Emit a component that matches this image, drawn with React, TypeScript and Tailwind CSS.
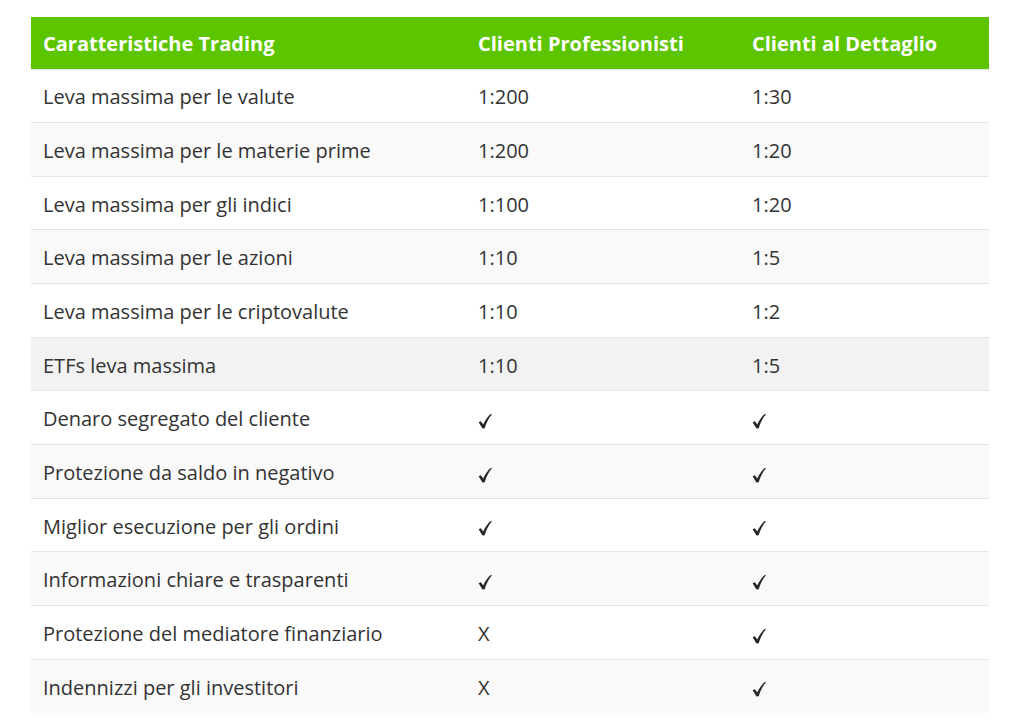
import React from 'react';

type Row = { label: string; pro: string; retail: string };

const rows: Row[] = [
  { label: 'Leva massima per le valute', pro: '1:200', retail: '1:30' },
  { label: 'Leva massima per le materie prime', pro: '1:200', retail: '1:20' },
  { label: 'Leva massima per gli indici', pro: '1:100', retail: '1:20' },
  { label: 'Leva massima per le azioni', pro: '1:10', retail: '1:5' },
  { label: 'Leva massima per le criptovalute', pro: '1:10', retail: '1:2' },
  { label: 'ETFs leva massima', pro: '1:10', retail: '1:5' },
  { label: 'Denaro segregato del cliente', pro: '✓', retail: '✓' },
  { label: 'Protezione da saldo in negativo', pro: '✓', retail: '✓' },
  { label: 'Miglior esecuzione per gli ordini', pro: '✓', retail: '✓' },
  { label: 'Informazioni chiare e trasparenti', pro: '✓', retail: '✓' },
  { label: 'Protezione del mediatore finanziario', pro: 'X', retail: '✓' },
  { label: 'Indennizzi per gli investitori', pro: 'X', retail: '✓' },
];

const Check = () => (
  <svg viewBox="0 0 14 16" className="inline-block h-[16px] w-[14px] align-middle" aria-label="✓">
    <path
      d="M0.6 9.3 L2.9 8.3 L5.2 11.6 C7.2 7.1 9.8 3.3 13.1 0.8 L13.8 1.6 C10.8 4.9 8.4 9.6 6.7 15.2 L4.5 15.6 Z"
      fill="#262626"
    />
  </svg>
);

const Cell: React.FC<{ value: string }> = ({ value }) => (value === '✓' ? <Check /> : <>{value}</>);

export default function App() {
  return (
    <div className="min-h-screen bg-white pt-[17px] font-['Open_Sans',sans-serif]">
      <table className="ml-[31px] w-[958px] table-fixed text-[20px] text-[#333]">
        <colgroup>
          <col className="w-[435px]" />
          <col className="w-[274px]" />
          <col className="w-[249px]" />
        </colgroup>
        <thead>
          <tr className="h-[52px] bg-[#5cc500] text-white">
            <th className="px-3 pt-[2px] text-left font-bold">Caratteristiche Trading</th>
            <th className="px-3 pt-[2px] text-left font-bold">Clienti Professionisti</th>
            <th className="px-3 pt-[2px] text-left font-bold">Clienti al Dettaglio</th>
          </tr>
        </thead>
        <tbody>
          {rows.map((r, i) => {
            // the ETFs row is the hovered one in the picture
            const bg = i === 5 ? 'bg-[#f2f2f2]' : i % 2 === 1 ? 'bg-[#f9f9f9]' : 'bg-white';
            return (
              <tr key={r.label} className={`h-[53.67px] border-t border-[#e6e6e6] ${bg}`}>
                <td className="px-3 pt-[3px]">{r.label}</td>
                <td className="px-3 pt-[3px]">
                  <Cell value={r.pro} />
                </td>
                <td className="px-3 pt-[3px]">
                  <Cell value={r.retail} />
                </td>
              </tr>
            );
          })}
        </tbody>
      </table>
    </div>
  );
}
